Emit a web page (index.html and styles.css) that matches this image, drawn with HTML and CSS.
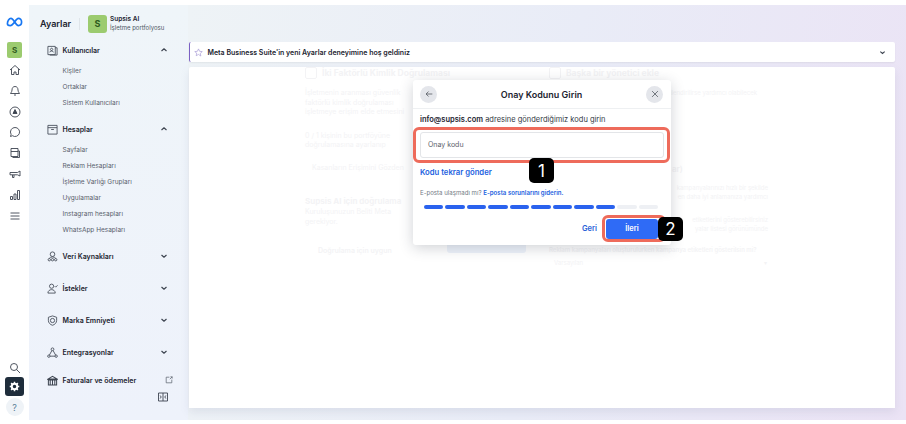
FILE: index.html
```html
<!DOCTYPE html>
<html lang="en">

<head>
    <meta charset="UTF-8">
    <title>Ayarlar</title>
    <link rel="stylesheet" href="styles.css">
</head>

<body>
    <div class="app">
        <nav class="rail">
            <svg class="metaLogo" viewBox="0 0 24 14"><path d="M2 9.500C2 5 4.500 2 7 2c4 0 6.500 10 10.500 10 2.500 0 4.500-2 4.500-5s-2-5-4.500-5C13.500 2 11 12 6 12 3.500 12 2 11.500 2 9.500z" fill="none" stroke="#1877f2" stroke-width="2.400"/></svg>
            <div class="railTile">S</div>
            <svg class="railIcon" viewBox="0 0 12 12"><path d="M1 6l5-4.500L11 6M2.500 5v5.500h2.500V8h2v2.500h2.500V5"/></svg>
            <svg class="railIcon" viewBox="0 0 12 12"><path d="M6 1.500c-2 0-3 1.500-3 3.500 0 2-1.500 3-1.500 3.500h9C10.500 8 9 7 9 5c0-2-1-3.500-3-3.500zM5 10h2"/></svg>
            <svg class="railIcon" viewBox="0 0 12 12"><circle cx="6" cy="6" r="5"/><path d="M6 3.500L8 7.500H4z" fill="#3d4450"/></svg>
            <svg class="railIcon" viewBox="0 0 12 12"><path d="M6 1.500a4.500 4.500 0 1 1-2.500 8.200L1.500 10.500l.6-2.200A4.500 4.500 0 0 1 6 1.500z"/></svg>
            <svg class="railIcon" viewBox="0 0 12 12"><path d="M2 1.500h7v8H2zM2 4.500h7M9 4h1.500v6.500h-7"/></svg>
            <svg class="railIcon" viewBox="0 0 12 12"><path d="M1 4.500h7.500L11 3v5L8.500 6.800H1zM3.500 7v2.500H5V7"/></svg>
            <svg class="railIcon" viewBox="0 0 12 12"><path d="M1.500 7.500h2v3h-2zM5 5h2v5.500H5zM8.500 1.500h2v9h-2z"/></svg>
            <svg class="railIcon" viewBox="0 0 12 12"><path d="M1.500 3h9M1.500 6h9M1.500 9h9"/></svg>
            <div class="railSpacer"></div>
            <svg class="railIcon railSearch" viewBox="0 0 12 12"><circle cx="5" cy="5" r="3.500"/><path d="M7.500 7.500l3.500 3.500"/></svg>
            <div class="railGear">
                <svg viewBox="0 0 12 12"><circle cx="6" cy="6" r="3" fill="none" stroke="#fff" stroke-width="2.200"/><path d="M6 .8v2M6 9.200v2M.8 6h2M9.200 6h2M2.300 2.300l1.400 1.400M8.300 8.300l1.400 1.400M9.700 2.300L8.300 3.700M3.700 8.300L2.300 9.700" stroke="#fff" stroke-width="1.600"/></svg>
            </div>
            <div class="railHelp">?</div>
        </nav>

        <aside class="sidebar">
            <header class="sideHeader">
                <span class="sideTitle">Ayarlar</span>
                <span class="sideDivider"></span>
                <span class="sideTile">S</span>
                <span class="sideOrg">
                    <b>Supsis AI</b>
                    <small>İşletme portfolyosu</small>
                </span>
            </header>

            <div class="group">
                <div class="groupHead">
                    <svg viewBox="0 0 12 12"><path d="M1 1.500h8v9H1zM9 3h2v8H3M3 8c0-2 4-2 4 0M5 3.500a1.300 1.300 0 1 0 .01 0"/></svg>
                    <span>Kullanıcılar</span>
                    <svg class="chevron" viewBox="0 0 8 8"><path d="M1.500 5L4 2.800 6.500 5"/></svg>
                </div>
                <a class="subItem">Kişiler</a>
                <a class="subItem">Ortaklar</a>
                <a class="subItem">Sistem Kullanıcıları</a>
            </div>

            <div class="group groupOpen">
                <div class="groupHead">
                    <svg viewBox="0 0 12 12"><path d="M1 1.500h10v9.500H1zM1 4h10M4.500 6h3"/></svg>
                    <span>Hesaplar</span>
                    <svg class="chevron" viewBox="0 0 8 8"><path d="M1.500 5L4 2.800 6.500 5"/></svg>
                </div>
                <a class="subItem">Sayfalar</a>
                <a class="subItem">Reklam Hesapları</a>
                <a class="subItem">İşletme Varlığı Grupları</a>
                <a class="subItem">Uygulamalar</a>
                <a class="subItem">Instagram hesapları</a>
                <a class="subItem">WhatsApp Hesapları</a>
            </div>

            <div class="groupHead closed firstClosed">
                <svg viewBox="0 0 12 12"><circle cx="6" cy="3.500" r="2.500"/><path d="M2.500 8c1-2 6-2 7 0"/><circle cx="2.500" cy="9.500" r="1.300"/><circle cx="6" cy="9.500" r="1.300"/><circle cx="9.500" cy="9.500" r="1.300"/></svg>
                <span>Veri Kaynakları</span>
                <svg class="chevron" viewBox="0 0 8 8"><path d="M1.500 3L4 5.200 6.500 3"/></svg>
            </div>
            <div class="groupHead closed">
                <svg viewBox="0 0 12 12"><circle cx="5" cy="3.500" r="2.300"/><path d="M1 11c0-5 8-5 8 0zM8.500 3.500l1 1L11.500 2.500"/></svg>
                <span>İstekler</span>
                <svg class="chevron" viewBox="0 0 8 8"><path d="M1.500 3L4 5.200 6.500 3"/></svg>
            </div>
            <div class="groupHead closed">
                <svg viewBox="0 0 12 12"><path d="M6 1l4.500 1.500V6c0 2.500-2 4.500-4.500 5.200C3.500 10.500 1.500 8.500 1.500 6V2.500z"/><circle cx="6" cy="6" r="2.300"/></svg>
                <span>Marka Emniyeti</span>
                <svg class="chevron" viewBox="0 0 8 8"><path d="M1.500 3L4 5.200 6.500 3"/></svg>
            </div>
            <div class="groupHead closed">
                <svg viewBox="0 0 12 12"><circle cx="6" cy="2.500" r="1.500"/><circle cx="2" cy="10" r="1.300"/><circle cx="10" cy="10" r="1.300"/><path d="M5.300 4L2.600 8.800M6.700 4l2.700 4.800M3.300 10h5.400"/></svg>
                <span>Entegrasyonlar</span>
                <svg class="chevron" viewBox="0 0 8 8"><path d="M1.500 3L4 5.200 6.500 3"/></svg>
            </div>
            <div class="groupHead closed billing">
                <svg viewBox="0 0 12 12"><path d="M1 4.500L6 1.500l5 3zM1.500 5.500h9v5.500h-9zM3.500 6v5M6 6v5M8.500 6v5" stroke-width="1.100"/></svg>
                <span>Faturalar ve ödemeler</span>
                <svg class="external" viewBox="0 0 10 10"><path d="M5.500 1.500H1.500v7h7v-4M6 4l3-3M6.800 1H9v2.200"/></svg>
            </div>
            <div class="collapseRow">
                <svg viewBox="0 0 10 10"><path d="M.5 1h9v8h-9zM5 1v8M2.200 3.500l1 1.500-1 1.500M7.800 3.500l-1 1.500 1 1.500" fill="none"/></svg>
            </div>
        </aside>

        <main class="content">
            <div class="banner">
                <svg class="bannerStar" viewBox="0 0 12 12"><path d="M6 1.200l1.500 3.200 3.500.4-2.600 2.400.7 3.500L6 8.600l-3.100 1.700.7-3.500L1 4.800l3.500-.4z"/></svg>
                <span>Meta Business Suite'in yeni Ayarlar deneyimine hoş geldiniz</span>
                <svg class="bannerChevron" viewBox="0 0 8 8"><path d="M1.500 3L4 5.200 6.500 3"/></svg>
            </div>
            <section class="panel">
                <div class="faintCol">
                    <h3 class="faintTitle">İki Faktörlü Kimlik Doğrulaması</h3>
                    <p>İşletmenin aranması güvenlik</p>
                    <p>faktörlü kimlik doğrulaması</p>
                    <p>işletmeye erişim elde etmesini</p>
                    <p class="faintGap">0 / 1 kişinin bu portföyüne</p>
                    <p>doğrulamasına ayarlanıp</p>
                    <p class="faintLink">Kasanların Erişimini Gözden</p>
                    <h3 class="faintHeading">Supsis AI için doğrulama</h3>
                    <p>Kuruluşunuzun Beliti Meta</p>
                    <p>gerekiyor.</p>
                    <p class="faintBadge">Doğrulama için uygun</p>
                </div>
                <div class="faintCol rightCol">
                    <h3 class="faintTitle">Başka bir yönetici ekle</h3>
                    <p class="faintEnd firstEnd">yetkilendirilirse yardımcı olabilecek</p>
                    <h4 class="faintSub">ar)</h4>
                    <p class="faintEnd">kampanyalarınızı hızlı bir şekilde</p>
                    <p class="faintEnd">en daha iyi anlamanıza yardımcı</p>
                    <p class="faintEnd faintGap">etiketlerini gösterebilirsiniz</p>
                    <p class="faintEnd">yalar listesi görünümünde</p>
                    <p class="faintStrong">Reklam kampanyaları oluşturulurken kampanya etiketleri gösterilsin mi?</p>
                    <p class="faintSelect"><span>Varsayılan</span><span>▾</span></p>
                </div>
            </section>
        </main>
    </div>

    <div class="faintButton"></div>

    <div class="dialog">
        <div class="dialogHead">
            <button class="roundBtn">
                <svg viewBox="0 0 12 12"><path d="M10 6H2.500M5.500 3L2.500 6l3 3"/></svg>
            </button>
            <span class="dialogTitle">Onay Kodunu Girin</span>
            <button class="roundBtn">
                <svg viewBox="0 0 12 12"><path d="M2.500 2.500l7 7M9.500 2.500l-7 7"/></svg>
            </button>
        </div>
        <div class="dialogBody">
            <p class="dialogLead"><b>info@supsis.com</b> adresine gönderdiğimiz kodu girin</p>
            <div class="codeInput">Onay kodu</div>
            <a class="resend">Kodu tekrar gönder</a>
            <p class="mailHelp">E-posta ulaşmadı mı? <a>E-posta sorunlarını giderin.</a></p>
            <div class="progress">
                <i></i><i></i><i></i><i></i><i></i><i></i><i></i><i></i><i></i><i class="todo"></i><i class="todo"></i>
            </div>
            <div class="dialogActions">
                <a class="backLink">Geri</a>
                <button class="nextBtn">İleri</button>
            </div>
        </div>
    </div>

    <div class="callout calloutInput"></div>
    <div class="callout calloutNext"></div>
    <div class="stepBadge stepOne">1</div>
    <div class="stepBadge stepTwo">2</div>
</body>

</html>
```

FILE: styles.css
```css
* { box-sizing: border-box; }
html, body { margin: 0; padding: 0; }
body { width: 906px; height: 424px; overflow: hidden; position: relative; background-color: #fff; font-family: Inter, "Liberation Sans", sans-serif; color: #1c2430; }
h3, h4, p { margin: 0; padding: 0; font-weight: normal; }
svg { display: block; fill: none; stroke: #3d4450; stroke-width: 0.900; }

.app { display: flex; height: 415px; margin-top: 5px; }

/* icon rail */
.rail { width: 29px; flex: none; display: flex; flex-direction: column; align-items: center; background-color: #fff; padding-top: 12px; }
.metaLogo { width: 17px; height: 10px; margin-bottom: 15px; }
.railTile { width: 15px; height: 16px; border-radius: 2px; background-color: #9ccb6f; color: #2f5a1e; font-size: 8px; font-weight: 700; display: flex; align-items: center; justify-content: center; margin-bottom: 6px; }
.railIcon { width: 12px; height: 12px; margin-bottom: 8.800px; }
.railSearch { margin-bottom: 3px; }
.railSpacer { flex: 1; }
.railGear { width: 19px; height: 19px; border-radius: 3px; background-color: #1f2d3b; display: flex; align-items: center; justify-content: center; }
.railGear svg { width: 11px; height: 11px; }
.railHelp { width: 18px; height: 18px; margin: 2px 0 4px; border-radius: 50%; background-color: #eff3f7; color: #5b7f98; font-size: 9px; display: flex; align-items: center; justify-content: center; }

/* settings sidebar */
.sidebar { width: 159px; flex: none; background: linear-gradient(180deg, #eff5f9 0%, #eef2fb 100%); padding: 9px 0 0 11px; font-size: 7px; }
.sideHeader { display: flex; align-items: center; height: 19px; margin-bottom: 9px; }
.sideTitle { font-size: 9px; font-weight: 600; width: 39px; }
.sideDivider { width: 1px; height: 12px; background-color: #dfe5ea; margin-right: 8px; }
.sideTile { width: 19px; height: 18px; border-radius: 3px; background-color: #9ccb6f; color: #2f5a1e; font-size: 9px; font-weight: 700; display: flex; align-items: center; justify-content: center; margin-right: 3px; }
.sideOrg { display: flex; flex-direction: column; font-size: 6.500px; line-height: 8.500px; }
.sideOrg b { font-weight: 600; font-size: 6.500px; }
.sideOrg small { font-size: 6px; color: #4e5763; }

.group { margin-bottom: 10px; }
.groupHead { display: flex; align-items: center; height: 16px; padding-left: 7px; font-weight: 600; font-size: 7px; }
.groupHead > svg:first-child { width: 11px; height: 11px; margin-right: 4.500px; flex: none; }
.groupHead .chevron { width: 8px; height: 8px; margin-left: auto; margin-right: 20px; stroke-width: 1.200; }
.subItem { display: block; height: 16px; line-height: 16px; padding-left: 22.500px; font-size: 6.500px; color: #59616c; }
.group .groupHead { margin-bottom: 5px; }
.groupOpen { margin-bottom: 0; }

.closed { margin-bottom: 16px; }
.firstClosed { margin-top: 10px; }
.billing { margin-bottom: 0; margin-top: -4px; }
.external { width: 8px; height: 8px; margin-left: auto; margin-right: 15px; stroke: #59616c; }
.collapseRow { display: flex; justify-content: flex-end; padding-right: 20px; margin-top: 4px; }
.collapseRow svg { width: 10px; height: 10px; }

/* main area */
.content { flex: 1; background: linear-gradient(100deg, #eef3f6 0%, #e9ecf7 50%, #ebe3f5 100%); padding: 37px 11px 12px 1px; display: flex; flex-direction: column; gap: 5px; }
.banner { height: 20px; flex: none; background-color: #fff; border-left: 1.500px solid #7b61c4; border-radius: 2px; display: flex; align-items: center; padding: 0 9px 0 3.500px; font-size: 7px; font-weight: 600; box-shadow: 0 1px 2px rgba(0, 0, 0, 0.06); }
.bannerStar { width: 9px; height: 9px; margin-right: 5px; stroke: #9d8fd0; stroke-width: 0.800; }
.bannerChevron { width: 7px; height: 7px; margin-left: auto; stroke-width: 1.300; }
.panel { flex: 1; background-color: #fff; border-radius: 2px 2px 0 0; display: flex; padding: 0 0 0 116px; overflow: hidden; font-size: 7px; color: #f3f3f5; line-height: 9.500px; box-shadow: 0 4px 8px rgba(120, 130, 160, 0.15); }

/* greyed-out page behind the dialog */
.faintCol { width: 108px; flex: none; }
.faintCol p { white-space: nowrap; }
.rightCol { width: 219px; margin-left: 136px; font-size: 6px; }
.faintTitle { display: flex; align-items: center; gap: 5px; font-size: 8.500px; font-weight: 700; margin-bottom: 9px; line-height: 10px; white-space: nowrap; }
.faintTitle::before { content: ""; width: 10px; height: 10px; flex: none; border: 1px solid #f3f3f5; border-radius: 2px; }
.faintGap { margin-top: 14px; }
.faintLink { margin: 13px 0 24px 7px; }
.faintHeading { font-size: 8px; font-weight: 700; line-height: 11px; white-space: nowrap; }
.faintBadge { margin-top: 20px; padding-left: 13px; font-weight: 600; }
.faintEnd { text-align: right; }
.firstEnd { padding-right: 11px; }
.rightCol .faintGap { margin-top: 13px; }
.faintSub { font-size: 8px; font-weight: 600; margin: 66px 0 9px 123px; line-height: 10px; }
.faintStrong { margin-top: 11px; font-weight: 600; }
.faintSelect { display: flex; justify-content: space-between; width: 213px; margin: 4px 0 0 5px; }
.faintButton { position: absolute; left: 447px; top: 235px; width: 79px; height: 18px; border-radius: 3px; background-color: #eef3fb; }

/* dialog */
.dialog { position: absolute; left: 413px; top: 80px; width: 258px; height: 165px; background-color: #fff; border-radius: 3px; box-shadow: 0 3px 14px rgba(40, 50, 70, 0.22); }
.dialogHead { display: flex; align-items: center; justify-content: space-between; height: 29px; padding: 0 8px 0 7px; border-bottom: 1px solid #eef0f2; }
.dialogTitle { font-size: 9px; font-weight: 600; }
.roundBtn { width: 17px; height: 17px; padding: 0; border: none; border-radius: 50%; background-color: #e4e6eb; display: flex; align-items: center; justify-content: center; }
.roundBtn svg { width: 10px; height: 10px; stroke: #4b5058; }
.dialogBody { padding: 5px 7px 0; }
.dialogLead { font-size: 7.500px; line-height: 12px; color: #333a44; }
.dialogLead b { font-weight: 600; color: #1c2430; }
.codeInput { height: 26px; margin-top: 6px; border: 1px solid #e3e5e8; border-radius: 3px; padding-left: 7px; font-size: 7px; line-height: 24px; color: #5c626b; }
.resend { display: block; margin-top: 9px; font-size: 7.700px; line-height: 11px; font-weight: 600; color: #1c5fe0; }
.mailHelp { margin-top: 11px; font-size: 6.100px; line-height: 8px; color: #737a84; white-space: nowrap; }
.mailHelp a { color: #1c5fe0; font-weight: 600; }
.progress { display: flex; gap: 2px; margin: 8px 6px 0 4px; }
.progress i { flex: 1; height: 3.500px; border-radius: 2px; background-color: #2a62ee; }
.progress .todo { background-color: #eef0f4; }
.dialogActions { display: flex; justify-content: flex-end; align-items: center; gap: 9px; margin-top: 10px; padding-right: 6px; }
.backLink { font-size: 7.500px; font-weight: 600; color: #2a62d8; }
.nextBtn { width: 52px; height: 20px; padding: 0; border: none; border-radius: 3px; background-color: #2f6bf6; color: #fff; font-family: Inter, "Liberation Sans", sans-serif; font-size: 7.500px; font-weight: 600; }

/* tutorial annotations drawn over the screenshot */
.callout { position: absolute; border: 3px solid #ee6b5b; border-radius: 6px; }
.calloutInput { left: 413px; top: 127px; width: 257px; height: 36px; }
.calloutNext { left: 602px; top: 215px; width: 64px; height: 27px; }
.stepBadge { position: absolute; width: 25px; height: 25px; border-radius: 5px; background-color: #000; color: #fff; font-size: 17px; display: flex; align-items: center; justify-content: center; }
.stepOne { left: 529px; top: 158px; }
.stepTwo { left: 658px; top: 217px; height: 24px; }
```
